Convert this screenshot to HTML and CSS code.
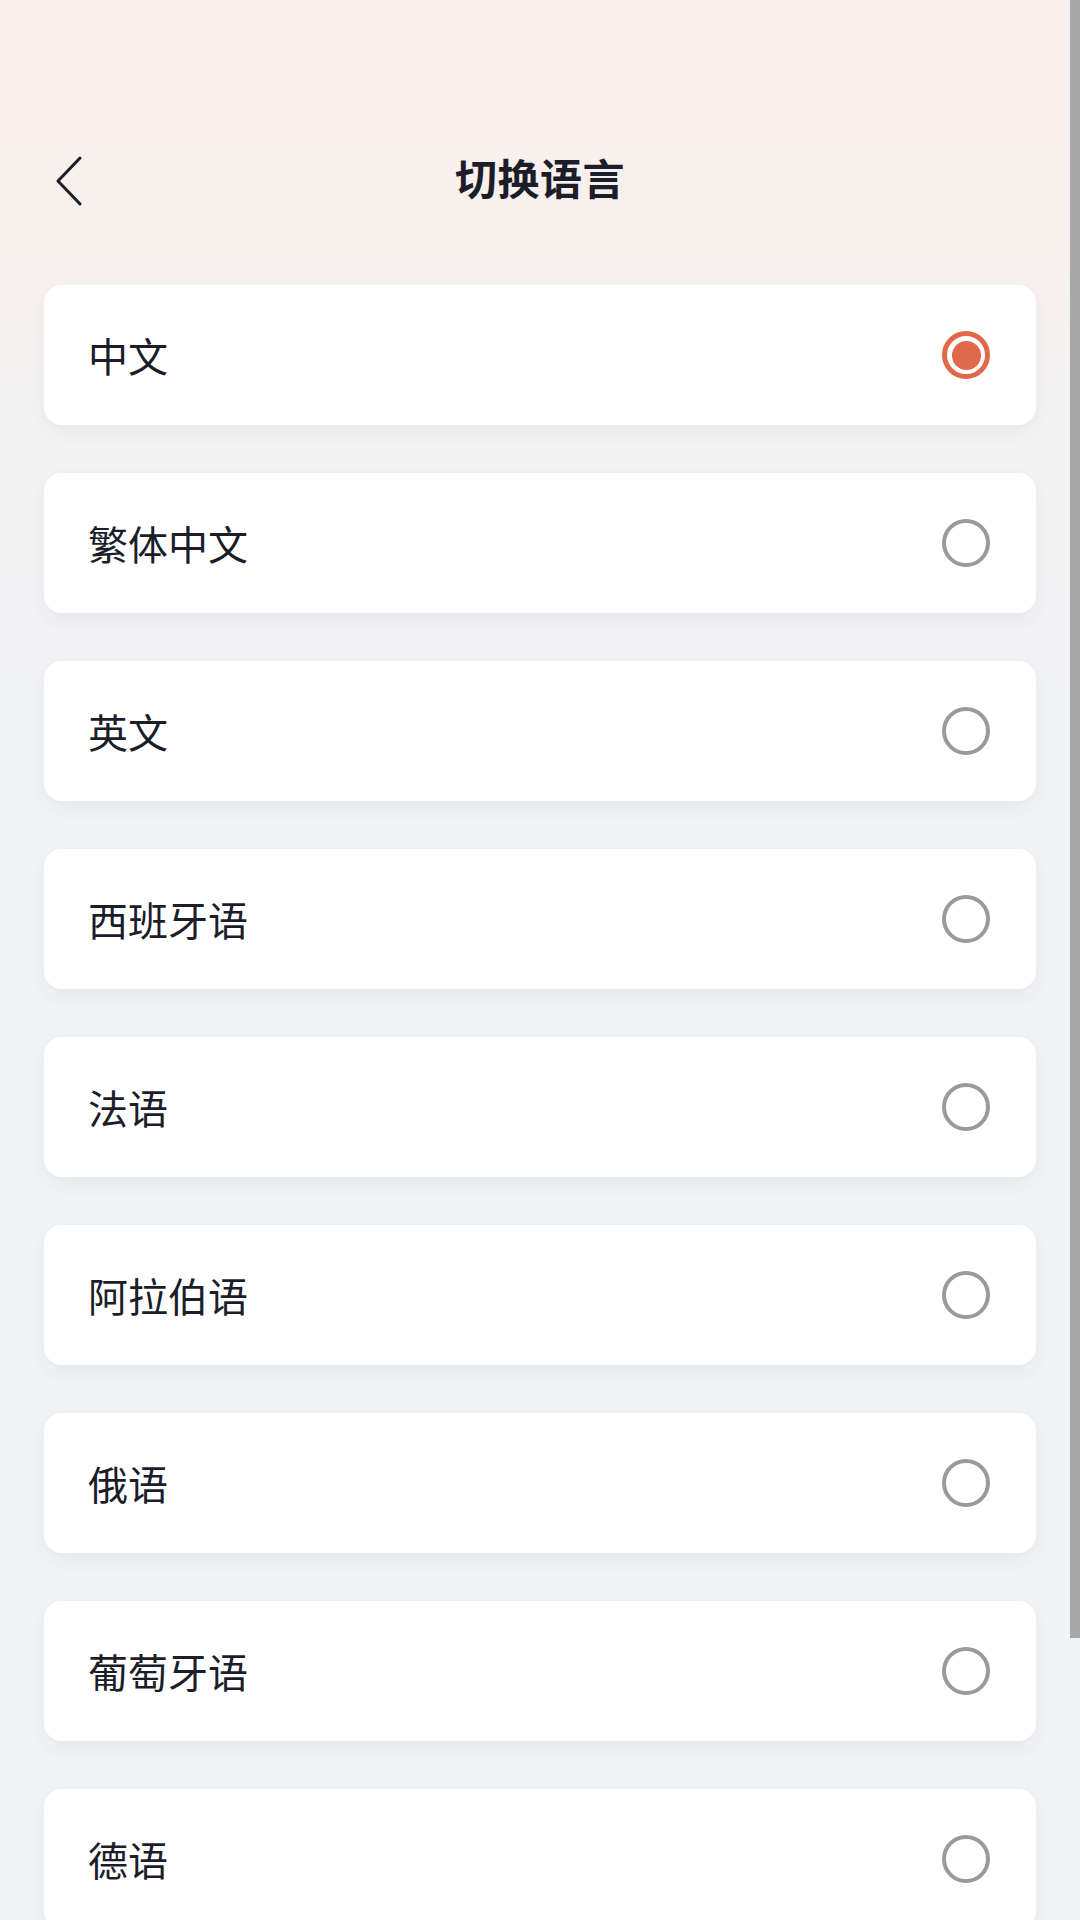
FILE: index.html
```html
<!DOCTYPE html>
<html lang="zh-CN">
<head>
  <meta charset="UTF-8">
  <title>切换语言</title>
  <link rel="stylesheet" href="styles.css">
</head>
<body>

  <div class="page">
    <!-- 顶部导航 -->
    <div class="nav">
      <span class="back">
        <svg width="30" height="50" viewBox="0 0 30 50"><path d="M26 2 L4 25 L26 48" fill="none" stroke="#1b1d29" stroke-width="3" stroke-linecap="round" stroke-linejoin="round"/></svg>
      </span>
      <h1 class="title">切换语言</h1>
    </div>

    <ul class="lang-list">
      <li class="lang-item"><span class="lang-name">中文</span><span class="radio checked"></span></li>
      <li class="lang-item"><span class="lang-name">繁体中文</span><span class="radio"></span></li>
      <li class="lang-item"><span class="lang-name">英文</span><span class="radio"></span></li>
      <li class="lang-item"><span class="lang-name">西班牙语</span><span class="radio"></span></li>
      <li class="lang-item"><span class="lang-name">法语</span><span class="radio"></span></li>
      <li class="lang-item"><span class="lang-name">阿拉伯语</span><span class="radio"></span></li>
      <li class="lang-item"><span class="lang-name">俄语</span><span class="radio"></span></li>
      <li class="lang-item"><span class="lang-name">葡萄牙语</span><span class="radio"></span></li>
      <li class="lang-item"><span class="lang-name">德语</span><span class="radio"></span></li>
    </ul>
  </div>

  <div class="scroll-thumb"></div>

</body>
</html>
```

FILE: styles.css
```css
html, body { margin: 0; height: 100%; overflow: hidden; }
body {
  font-family: "Noto Sans CJK SC", "Noto Sans", sans-serif;
  color: #1b1d29;
  background: linear-gradient(to bottom, #f9f0ed 0, #f8f0ed 240px, #f4f3f4 400px, #f2f3f5 700px, #f2f3f5 100%);
}
.page { padding: 137px 44px 0 44px; }
.nav { position: relative; height: 88px; display: flex; align-items: center; justify-content: center; }
.back { position: absolute; left: 10px; top: 19px; width: 30px; height: 50px; }
.back svg { display: block; }
.title { margin: 0 0 8px 0; font-size: 42px; font-weight: 700; letter-spacing: 0.5px; line-height: 1; }
.lang-list { list-style: none; margin: 60px 0 0 0; padding: 0; display: flex; flex-direction: column; gap: 48px; }
.lang-item {
  height: 140px;
  box-sizing: border-box;
  display: flex;
  align-items: center;
  justify-content: space-between;
  padding: 0 46px 0 44px;
  background: #fff;
  border-radius: 18px;
  box-shadow: 0 8px 22px rgba(40, 50, 70, 0.06);
}
.lang-name { font-size: 40px; line-height: 1; }
.radio {
  width: 48px; height: 48px;
  box-sizing: border-box;
  border: 4px solid #9a9a9a;
  border-radius: 50%;
  display: flex; align-items: center; justify-content: center;
}
.radio.checked { border: 5px solid #e0694b; }
.radio.checked::after { content: ""; width: 29px; height: 29px; border-radius: 50%; background: #e0694b; }
.scroll-thumb { position: absolute; top: 0; right: 0; width: 10px; height: 1638px; background: #a7a7a7; }
```
